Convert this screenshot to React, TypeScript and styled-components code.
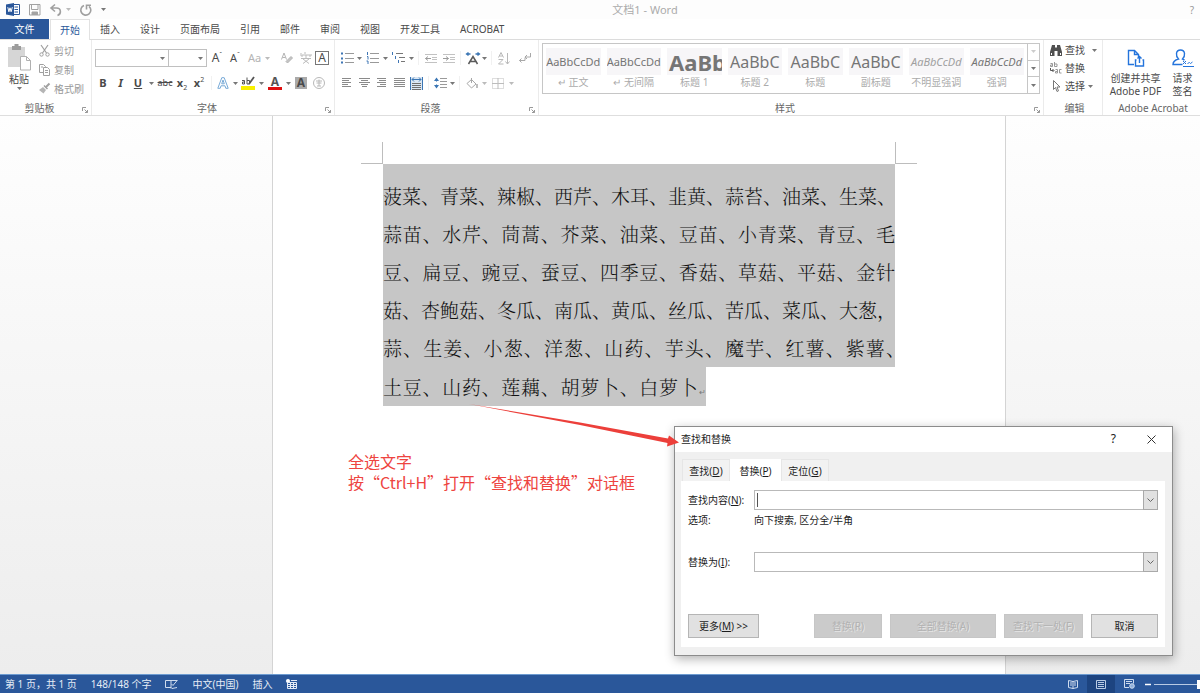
import React from "react";
import styled, { createGlobalStyle, css } from "styled-components";

const ui = '"Noto Sans", "Noto Sans CJK SC", sans-serif';
const blue = "#2a579a";
const ink = "#4a4a4a";
const faded = "#b4b4b4";

const GlobalStyle = createGlobalStyle`
  * { box-sizing: border-box; }
  body { margin: 0; background: #fff; font: 10px/14px ${ui}; color: ${ink}; }
  button, input { font: inherit; color: inherit; padding: 0; margin: 0; border: 0; background: none; border-radius: 0; }
  button { white-space: nowrap; }
  svg { display: block; flex: none; overflow: visible; }
`;

const Window = styled.div`
  position: relative;
  display: flex;
  flex-direction: column;
  min-height: 100vh;
  overflow: hidden;
`;

/* ---------- title bar and tabs ---------- */

const TitleBar = styled.header`
  display: flex;
  align-items: center;
  height: 19px;
  padding: 0 6px;
  background: #fdfdfd;
`;

const QuickAccess = styled.div`
  display: flex;
  align-items: center;
  flex: 1;
  gap: 9px;
`;

const QuickButton = styled.button`
  display: flex;
  align-items: center;
  gap: 4px;
`;

const DocTitle = styled.h1`
  margin: 0;
  padding-left: 90px;
  font-size: 11px;
  font-weight: 400;
  line-height: 18px;
  color: #ababab;
`;

const TitleEnd = styled.div`
  flex: 1;
  display: flex;
  justify-content: flex-end;
  color: #999;
`;

const TabBar = styled.nav`
  display: flex;
  height: 21px;
  border-bottom: 1px solid #dcdcdc;
`;

const Tab = styled.button<{ $active?: boolean }>`
  height: 20px;
  padding: 0 10px;
  ${(p) =>
    p.$active &&
    css`
      height: 21px;
      padding: 0 9px 1px;
      color: ${blue};
      background: #fff;
      border: 1px solid #e2e2e2;
      border-bottom: 0;
    `}
`;

const FileTab = styled.button`
  width: 49px;
  height: 20px;
  margin-right: 1px;
  color: #fff;
  background: ${blue};
`;

/* ---------- ribbon ---------- */

const Ribbon = styled.section`
  display: flex;
  height: 76px;
  border-bottom: 1px solid #dedede;
`;

const Group = styled.section<{ $w?: number }>`
  display: flex;
  flex-direction: column;
  min-width: 0;
  padding: 1px 0 0 3px;
  border-right: 1px solid #ebebeb;
  ${(p) => (p.$w ? `flex: none; width: ${p.$w}px;` : "flex: 1;")}
  &:last-child { border-right: 0; }
`;

const GroupFoot = styled.footer<{ $launch?: boolean }>`
  display: flex;
  align-items: center;
  justify-content: center;
  position: relative;
  height: 15px;
  margin-top: auto;
  padding-right: ${(p) => (p.$launch ? 15 : 0)}px;
  color: #666;
`;

const Launcher = styled.button`
  position: absolute;
  right: 3px;
  bottom: 2px;
`;

const ToolRows = styled.div`
  display: flex;
  flex-direction: column;
  gap: 7px;
  padding-top: 8px;
`;

const ToolRow = styled.div`
  display: flex;
  align-items: center;
  height: 18px;
`;

const Tool = styled.button<{ $w: number; $dim?: boolean }>`
  display: flex;
  align-items: center;
  justify-content: center;
  gap: 4px;
  flex: none;
  width: ${(p) => p.$w}px;
  height: 18px;
  color: ${(p) => (p.$dim ? faded : ink)};
`;

const Divider = styled.span`
  flex: none;
  width: 7px;
  height: 14px;
  background: linear-gradient(#f1f1f1, #f1f1f1) center / 1px 100% no-repeat;
`;

const Combo = styled.div<{ $w: number }>`
  display: flex;
  align-items: center;
  width: ${(p) => p.$w}px;
  height: 18px;
  border: 1px solid #c0c0c0;
  & + & { border-left: 0; }
  input { flex: 1; width: 0; height: 16px; outline: 0; }
  button { width: 11px; display: flex; justify-content: center; }
`;

const ClipBody = styled.div`
  display: flex;
  gap: 3px;
`;

const PasteButton = styled.button`
  display: flex;
  flex-direction: column;
  align-items: center;
  width: 32px;
  padding-top: 3px;
  gap: 1px;
`;

const ClipList = styled.div`
  display: flex;
  flex-direction: column;
  padding-left: 1px;
`;

const ClipItem = styled.button`
  display: flex;
  align-items: center;
  gap: 4px;
  height: 19px;
  color: #999;
`;

const Glyph = styled.span<{ $size?: number; $bold?: boolean; $italic?: boolean; $line?: string; $color?: string }>`
  font-size: ${(p) => p.$size ?? 11}px;
  line-height: 14px;
  font-weight: ${(p) => (p.$bold ? 700 : 400)};
  font-style: ${(p) => (p.$italic ? "italic" : "normal")};
  text-decoration: ${(p) => p.$line ?? "none"};
  color: ${(p) => p.$color ?? "inherit"};
  sub, sup { font-size: 7px; line-height: 0; font-weight: 400; }
`;

const BoxedLetter = styled.span<{ $filled?: boolean }>`
  display: flex;
  align-items: center;
  justify-content: center;
  width: ${(p) => (p.$filled ? 12 : 14)}px;
  height: ${(p) => (p.$filled ? 12 : 14)}px;
  font-size: 12px;
  font-weight: ${(p) => (p.$filled ? 700 : 400)};
  border: ${(p) => (p.$filled ? "0" : "1px solid #777")};
  background: ${(p) => (p.$filled ? "#aaa" : "none")};
`;

const Underbar = styled.span<{ $bar: string }>`
  display: flex;
  flex-direction: column;
  align-items: center;
  width: 14px;
  border-bottom: 3px solid ${(p) => p.$bar};
  font-size: 12px;
  line-height: 11px;
  font-weight: 700;
  color: #555;
`;

/* style gallery */

const Gallery = styled.div`
  display: flex;
  height: 51px;
  margin: 2px 3px 0 0;
  border: 1px solid #c6c6c6;
`;

const StyleGrid = styled.div`
  flex: 1;
  min-width: 0;
  display: grid;
  grid-template-columns: repeat(8, minmax(0, 1fr));
`;

const StyleCard = styled.button`
  display: flex;
  flex-direction: column;
  align-items: stretch;
  justify-content: flex-start;
  padding: 4px 3px 0;
  min-width: 0;
  color: #ababab;
`;

const Sample = styled.span<{ $size: number; $bold?: boolean; $italic?: boolean; $soft?: boolean }>`
  display: flex;
  align-items: center;
  justify-content: ${(p) => (p.$bold ? "flex-start" : "center")};
  height: 27px;
  padding-left: ${(p) => (p.$bold ? 2 : 0)}px;
  line-height: 24px;
  overflow: hidden;
  background: #f7f6f8;
  color: ${(p) => (p.$soft ? "#a0a0a0" : "#757575")};
  font-size: ${(p) => p.$size}px;
  font-weight: ${(p) => (p.$bold ? 700 : 400)};
  font-style: ${(p) => (p.$italic ? "italic" : "normal")};
`;

const GalleryScroll = styled.div`
  display: flex;
  flex-direction: column;
  width: 12px;
  border-left: 1px solid #c6c6c6;
  button {
    flex: 1;
    display: flex;
    align-items: center;
    justify-content: center;
  }
  button + button { border-top: 1px solid #c6c6c6; }
`;

const EditList = styled.div`
  display: flex;
  flex-direction: column;
  padding-left: 3px;
`;

const EditItem = styled.button<{ $spread?: boolean }>`
  display: flex;
  align-items: center;
  gap: 3px;
  height: 18px;
  svg:last-child { margin-left: ${(p) => (p.$spread ? 4 : 0)}px; }
`;

const AcrobatBody = styled.div`
  display: flex;
  justify-content: center;
  margin-left: -3px;
`;

const AcrobatButton = styled.button<{ $w: number }>`
  display: flex;
  flex-direction: column;
  align-items: center;
  width: ${(p) => p.$w}px;
  gap: 5px;
  padding-top: 8px;
  line-height: 13px;
  white-space: pre;
`;

/* ---------- document ---------- */

const Workspace = styled.main`
  flex: 1;
  display: grid;
  grid-template-columns: 272fr 734px 194fr;
  background: linear-gradient(#fefefe, #ededed);
`;

const Page = styled.article`
  grid-column: 2;
  padding: 26px 110px 0;
  background: #fff;
  border: solid #d4d4d4;
  border-width: 0 1px;
`;

const CropMarks = styled.div`
  display: flex;
  justify-content: space-between;
  margin: 0 -22px;
`;

const Corner = styled.span<{ $side: "left" | "right" }>`
  width: 22px;
  height: 22px;
  border-bottom: 1px solid #bdbdbd;
  ${(p) => (p.$side === "left" ? "border-right" : "border-left")}: 1px solid #bdbdbd;
`;

const Lines = styled.div`
  font: 300 19px/38px "Noto Serif CJK SC", "Noto Sans CJK SC", serif;
  color: #111;
`;

const Selection = styled.div`
  padding-top: 13px;
  background: #c6c6c6;
`;

const Line = styled.p<{ $last?: boolean; $hang?: boolean }>`
  margin: 0;
  margin-right: ${(p) => (p.$hang ? -10 : 0)}px;
  white-space: nowrap;
  text-align: justify;
  text-align-last: justify;
  ${(p) =>
    p.$last &&
    css`
      width: 63%;
      height: 39px;
      line-height: 39px;
      background: #c6c6c6;
    `}
  small { font-size: 8px; color: #777; }
`;

/* ---------- annotation ---------- */

const Note = styled.p`
  position: absolute;
  left: 348px;
  top: 451px;
  margin: 0;
  font: 16px/21px "Noto Sans CJK SC", sans-serif;
  color: #ee4440;
  white-space: nowrap;
`;

const Arrow = styled.svg`
  position: absolute;
  left: 468px;
  top: 402px;
  z-index: 3;
  pointer-events: none;
`;

/* ---------- dialog ---------- */

const Dialog = styled.section`
  position: absolute;
  z-index: 2;
  left: 674px;
  top: 426px;
  width: 499px;
  display: flex;
  flex-direction: column;
  padding-bottom: 8px;
  border: 1px solid #8c8c8c;
  background: #f0f0f0;
  box-shadow: 1px 3px 10px rgba(0, 0, 0, 0.3);
  color: #1c1c1c;
`;

const DialogTitle = styled.header`
  display: flex;
  align-items: center;
  height: 25px;
  padding: 0 16px 1px 6px;
  background: #fff;
  h2 { flex: 1; margin: 0; font-size: 10px; font-weight: 400; }
`;

const TitleButton = styled.button<{ $gap?: boolean }>`
  display: flex;
  font-size: 12px;
  margin-right: ${(p) => (p.$gap ? 31 : 0)}px;
`;

const DialogTabs = styled.div`
  display: flex;
  padding: 7px 0 0 7px;
`;

const DialogTab = styled.button<{ $active?: boolean; $w: number }>`
  width: ${(p) => p.$w}px;
  height: 22px;
  border: 1px solid ${(p) => (p.$active ? "#fff" : "#e6e6e6")};
  border-bottom: 0;
  background: ${(p) => (p.$active ? "#fff" : "#f2f2f2")};
`;

const DialogPanel = styled.div`
  display: flex;
  flex-direction: column;
  margin: 0 7px 0 6px;
  padding: 9px 7px 9px;
  background: #fff;
`;

const Field = styled.div`
  display: grid;
  grid-template-columns: 66px 1fr;
  align-items: center;
  min-height: 20px;
  label { white-space: nowrap; }
`;

const FieldGroup = styled.div`
  display: flex;
  flex-direction: column;
  height: 62px;
`;

const InputBox = styled.div`
  position: relative;
  display: flex;
  height: 20px;
  border: 1px solid #b9b9b9;
  input { flex: 1; min-width: 0; padding: 0 4px; outline: 0; }
  button {
    display: flex;
    align-items: center;
    justify-content: center;
    width: 15px;
    margin: -1px;
    border: 1px solid #a9a9a9;
    background: #e1e1e1;
  }
`;

const Caret = styled.span`
  position: absolute;
  left: 2px;
  top: 2px;
  width: 1px;
  height: 14px;
  background: #555;
`;

const Actions = styled.div`
  display: flex;
  gap: 8px;
`;

const ActionButton = styled.button<{ $w: number; $push?: boolean }>`
  width: ${(p) => p.$w}px;
  height: 24px;
  border: 1px solid #b5b5b5;
  background: #e1e1e1;
  ${(p) => p.$push && "margin-right: auto;"}
  &:disabled {
    border-color: #c6c6c6;
    background: #cbcbcb;
    color: #b2b2b2;
    text-shadow: 1px 1px 0 #e6e6e6;
  }
`;

/* ---------- status bar ---------- */

const StatusBar = styled.footer`
  display: flex;
  align-items: center;
  height: 19px;
  padding-left: 5px;
  background: ${blue};
  border-top: 1px solid #6d9bd0;
  color: #e6edf6;
`;

const StatusItems = styled.div`
  display: flex;
  align-items: center;
  gap: 14px;
  flex: 1;
`;

const ViewButton = styled.button<{ $on?: boolean }>`
  display: flex;
  align-items: center;
  justify-content: center;
  width: 28px;
  height: 18px;
  background: ${(p) => (p.$on ? "#1d4480" : "none")};
`;

const ZoomSlider = styled.input`
  appearance: none;
  width: 46px;
  height: 12px;
  margin-left: 2px;
  background: linear-gradient(#b9cbe4, #b9cbe4) center / 100% 1px no-repeat;
  &::-webkit-slider-thumb {
    appearance: none;
    width: 3px;
    height: 9px;
    background: #fff;
  }
`;

/* ---------- icons ---------- */

const Caron = ({ c = "#777" }: { c?: string }) => (
  <svg width="5" height="3" viewBox="0 0 5 3"><path d="M0 0h5L2.5 3z" fill={c} /></svg>
);

const Icon = ({ w = 14, h = 14, children, c = "#777" }: { w?: number; h?: number; c?: string; children: React.ReactNode }) => (
  <svg width={w} height={h} viewBox={`0 0 ${w} ${h}`} fill="none" stroke={c} strokeWidth="1">{children}</svg>
);

const WordLogo = () => (
  <Icon w={14} h={13} c="none">
    <path d="M7 1.5h6.5v10H7z" fill="#fff" stroke={blue} />
    <path d="M8.500 4h3.500M8.500 6.500h3.500M8.500 9h3.500" stroke={blue} />
    <path d="M0 1.500 8 0v13L0 11.500z" fill={blue} />
    <path d="M1.800 4.200 2.900 8.800 4 4.800 5.100 8.800 6.300 4.200" stroke="#fff" />
  </Icon>
);

const SaveIcon = () => (
  <Icon w={12} h={12} c="#a3a3a3">
    <path d="M.5.5h10.500v10.500H.5z" /><path d="M2.500.5v5h6.500v-5" /><path d="M3 11V8h5.500v3" fill="#a3a3a3" />
  </Icon>
);

const UndoIcon = () => (
  <Icon w={12} h={12} c="#a0a0a0"><path d="M5 .5 1 4l4 3.500M1 4h5.500c5 0 5 6 1 7.500" strokeWidth="1.600" /></Icon>
);

const RedoIcon = () => (
  <Icon w={12} h={12} c="#a0a0a0"><path d="M4 1.500a5 5 0 1 0 5 .8M6.500 5.500V1.200H11" strokeWidth="1.600" /></Icon>
);

const LaunchIcon = () => (
  <Icon w={6} h={6} c="#999"><path d="M.5 4V.5H4M2.500 2.500l3 3M5.500 3v2.500H3" /></Icon>
);

const PasteIcon = () => (
  <Icon w={24} h={27} c="none">
    <path d="M1 3h17v20H1z" fill="#d6d6d6" /><path d="M5 2h2.500V0h4v2H14v4H5z" fill="#9c9c9c" />
    <path d="M13.500 12.500h6l4 4v9.500h-10z" fill="#fff" stroke="#b0b0b0" /><path d="M19.500 12.500v4h4" stroke="#b0b0b0" />
  </Icon>
);

const CutIcon = () => (
  <Icon w={11} h={12} c="#a0a0a0">
    <path d="M2 0l5.500 8M9 0 3.500 8" strokeWidth="1.200" /><circle cx="2.500" cy="9.500" r="1.700" /><circle cx="8.500" cy="9.500" r="1.700" />
  </Icon>
);

const CopyIcon = () => (
  <Icon w={11} h={12} c="#a0a0a0">
    <path d="M.5.5h4l2 2v6h-6z" /><path d="M4.500 3.500h4l2 2v6h-6z" fill="#fff" /><path d="M6 6.500h3M6 8.500h3M2 3h2" />
  </Icon>
);

const BrushIcon = () => (
  <Icon w={11} h={11} c="#a0a0a0">
    <path d="M10.500.5 7 4" strokeWidth="2" /><path d="M5 2.500 8.500 6" strokeWidth="1.500" /><path d="M4 4 7 7 4.500 10.500 0 7z" fill="#b5b5b5" stroke="none" />
  </Icon>
);

const ListIcon = ({ kind }: { kind: "dot" | "num" | "level" }) => (
  <Icon w={13} h={12}>
    {kind === "level" ? (
      <>
        <path d="M4 1.500h7M7 5.500h6M9 9.500h4" /><path d="M.5 0v3M3.500 4v3M6.500 8v3" stroke="#3f76b5" />
      </>
    ) : (
      <>
        <path d="M4 1.500h9M4 6.500h9M4 10.500h9" stroke="#999" />
        {kind === "dot" ? (
          <path d="M0 1.500h2M0 6.500h2M0 10.500h2" stroke="#3f76b5" strokeWidth="2" />
        ) : (
          <path d="M1.500 0v3M1 4.500h1v3M.5 9h1.500v3" stroke="#3f76b5" />
        )}
      </>
    )}
  </Icon>
);

const IndentIcon = ({ right }: { right?: boolean }) => (
  <Icon w={12} h={9} c="#c2c2c2">
    <path d="M0 .5h12M7 3.500h5M7 5.500h5M0 8.500h12" />
    <path d={right ? "M0 4.500h5.500M3 2.500l2.500 2L3 6.500" : "M6 4.500H.5M3 2.500.5 4.500 3 6.500"} stroke="#9c9c9c" />
  </Icon>
);

const AlignIcon = ({ rows }: { rows: [number, number][] }) => (
  <Icon w={11} h={10} c="#8a8a8a">
    <path d={rows.map(([x, len], i) => `M${x} ${i * 2 + 0.5}h${len}`).join("")} />
  </Icon>
);

const DistributeIcon = () => (
  <Icon w={13} h={13} c="#6f6f6f">
    <path d="M0 0h13v13H0z" fill="#dbe7f3" stroke="none" />
    <path d="M.5 0v13M12.500 0v13M2 2.500h9M4 .5 2 2.500l2 2M9 .5l2 2-2 2" stroke="#3b76b4" />
    <path d="M2 6.500h9M2 8.500h9M2 10.500h9M2 12.500h9" />
  </Icon>
);

const SpacingIcon = () => (
  <Icon w={13} h={12} c="#9a9a9a">
    <path d="M6 1.500h7M6 4.500h7M6 7.500h7M6 10.500h7" />
    <path d="M2.500 1v3.500M2.500 7.500V11" stroke="#3b76b4" />
    <path d="M0 4 2.500.500 5 4zM0 8l2.500 3.500L5 8z" fill="#3b76b4" stroke="none" />
  </Icon>
);

const ScaleIcon = () => (
  <Icon w={14} h={13} c="#5a5a5a">
    <path d="M2.500 12 7 4.500 11.500 12M4.500 9.500h5" strokeWidth="1.500" />
    <path d="M.5 2h4M2.500.5.5 2l2 1.500M13.500 2h-4M11.500.5l2 1.500-2 1.500" stroke="#3b76b4" strokeWidth="1.300" />
  </Icon>
);

const SortIcon = () => (
  <Icon w={12} h={13} c="#b8b8b8">
    <path d="M.5 5.500 3 .5l2.500 5M1.500 4h3M.5 7.500h4.500L.5 12h5M9.500 1v11M7.500 9.500l2 2.500 2-2.500" />
  </Icon>
);

const MarkIcon = () => (
  <Icon w={12} h={12} c="#a8a8a8">
    <path d="M11.500 1v4H6M8 3 6 5l2 2M6 5.500v3H.5M2.500 6.500l-2 2 2 2" />
  </Icon>
);

const BucketIcon = () => (
  <Icon w={12} h={11} c="#a8a8a8"><path d="M5.500 1.500 10 6l-4.500 4L1 5.500zM5.500 0v5" /><path d="M11 6v4" strokeWidth="1.500" /></Icon>
);

const BordersIcon = () => (
  <Icon w={12} h={11} c="#bdbdbd"><path d="M.5.500h11v10H.5z" strokeDasharray="1 1" /><path d="M0 5.500h12M6 0v11" /></Icon>
);

const EraserIcon = () => (
  <Icon w={12} h={12} c="#b4b4b4"><path d="M.5 7.500 3 1l2.500 6.500M1.500 5.500h3" /><path d="m5 9.500 5-5 1.500 1.500-5 5z" fill="#c4c4c4" /></Icon>
);

const PhoneticIcon = () => (
  <Icon w={12} h={12} c="#bcbcbc"><path d="M1 1v3h2V2M5 0v4h2V2M9 2v2h2V2M1 6.500h10M6 5v1.500M3 7l6 4.500M9 7l-6 4.500" /></Icon>
);

const OutlineA = () => (
  <Icon w={12} h={12} c="#79abd8"><path d="M.8 11.300 4.800.7h2.400l4 10.600H8.800L8 8.800H4L3.200 11.300zM4.700 6.800h2.600L6 3z" fill="#fff" /></Icon>
);

const HighlightIcon = () => (
  <Icon w={14} h={14} c="#555">
    <path d="M1 4.500h2.500V8H1.500V6h2M6 1.500V8h2.500V4.500H6" /><path d="m13 1-5 7" strokeWidth="1.800" /><path d="M0 10h14v4H0z" fill="#f8f000" stroke="none" />
  </Icon>
);

const CircleCharIcon = () => (
  <Icon w={12} h={12} c="#b8b8b8"><circle cx="6" cy="6" r="5.500" /><path d="M3 4h6M6 2.500V9M3.500 6h5M4 9h4" /></Icon>
);

const FindIcon = () => (
  <Icon w={12} h={11} c="none">
    <path d="M2 0h3v2.500h2V0h3l2 7v4H7.500V6h-3v5H0V7z" fill="#505050" /><path d="M1.500 8v2M10.500 8v2" stroke="#fff" />
  </Icon>
);

const ReplaceIcon = () => (
  <Icon w={12} h={12} c="#999">
    <path d="M.5 1.500h2v3h-2v-1.500h2M4.500 0v4.500h2.500v-2.500H4.500M5.500 7.500h2V11h-2V9.500h2M11.500 7.500H9.500V11h2" /><path d="M.5 6v2.500h3M2.500 7l1.500 1.500L2.500 10" stroke="#555" />
  </Icon>
);

const PointerIcon = () => (
  <Icon w={12} h={12} c="#777"><path d="M3.500.5v9l2-2 1.500 4 1.500-.7-1.500-3.800h3z" fill="#fff" /></Icon>
);

const PdfIcon = () => (
  <Icon w={18} h={18} c="#2474dc">
    <path d="M7 15.500H1.500v-14h6l4 4V8M7.500 1.500v4h4" strokeWidth="1.400" />
    <path d="M9.500 11H8.500v6h8v-6h-1M12.500 14V7.500M10.500 9.500l2-2 2 2" strokeWidth="1.400" />
  </Icon>
);

const SignIcon = () => (
  <Icon w={22} h={18} c="#2474dc">
    <path d="M10.500 15.500H1c0-3.500 2-4.500 5.500-5.500C3.500 7 3.500 1 8.500 1s5 6 2 9l2 1" strokeWidth="1.400" />
    <path d="m11 12 3 3M14 12l-3 3M15.500 14.500l2-1 1 1 2-1.500M11 17.500h11" />
  </Icon>
);

const CloseIcon = () => (
  <Icon w={9} h={9} c="#333"><path d="m.5.5 8 8M8.500.5l-8 8" /></Icon>
);

const ChevronIcon = () => (
  <Icon w={7} h={5} c="#666"><path d="m.5.5 3 3 3-3" /></Icon>
);

const ProofIcon = () => (
  <Icon w={13} h={10} c="#cfdcee"><path d="M6 1.500v8M6 1.500H.5v7H6l1 1 5-1M6 1.500h6M12.500 1 8 6.500 6.500 5" /></Icon>
);

const MacroIcon = () => (
  <Icon w={11} h={10} c="#e3ebf6"><path d="M1.500 3.500h9v6h-9zM1.500 5.500h9M1.500 7.500h9M4.500 3.500v6M7.500 3.500v6" /><circle cx="2" cy="2" r="1.700" fill="#fff" /><path d="M5 1.500h6" /></Icon>
);

const ReadIcon = () => (
  <Icon w={10} h={9} c="#cfdcee"><path d="M5 1v8M.5.5 5 1.500 9.500.5v7L5 8.500.5 7.500zM2 3h2M2 5h2M6 3h2M6 5h2" /></Icon>
);

const PrintIcon = () => (
  <Icon w={10} h={9} c="#b9cbe4"><path d="M.5.5h9v8h-9zM2 2.500h6M2 4.500h6M2 6.500h6" /></Icon>
);

const WebIcon = () => (
  <Icon w={11} h={10} c="#cfdcee"><path d="M5 8.500H.5v-8h9v4M2 2.500h6M2 4.500h4" /><circle cx="8" cy="7" r="2.300" fill="#8fb0dc" /></Icon>
);

/* ---------- data ---------- */

const tabs = ["插入", "设计", "页面布局", "引用", "邮件", "审阅", "视图", "开发工具", "ACROBAT"];

const styleCards = [
  { sample: "AaBbCcDd", name: "↵ 正文", size: 11 },
  { sample: "AaBbCcDd", name: "↵ 无间隔", size: 11 },
  { sample: "AaBb", name: "标题 1", size: 22, bold: true },
  { sample: "AaBbC", name: "标题 2", size: 16 },
  { sample: "AaBbC", name: "标题", size: 16 },
  { sample: "AaBbC", name: "副标题", size: 16 },
  { sample: "AaBbCcDd", name: "不明显强调", size: 11, italic: true, soft: true },
  { sample: "AaBbCcDd", name: "强调", size: 11, italic: true },
];

const lines = [
  { text: "菠菜、青菜、辣椒、西芹、木耳、韭黄、蒜苔、油菜、生菜、" },
  { text: "蒜苗、水芹、茼蒿、芥菜、油菜、豆苗、小青菜、青豆、毛" },
  { text: "豆、扁豆、豌豆、蚕豆、四季豆、香菇、草菇、平菇、金针" },
  { text: "菇、杏鲍菇、冬瓜、南瓜、黄瓜、丝瓜、苦瓜、菜瓜、大葱，" },
  { text: "蒜、生姜、小葱、洋葱、山药、芋头、魔芋、红薯、紫薯、", hang: true },
];

const Foot = ({ label, launch }: { label: string; launch?: boolean }) => (
  <GroupFoot $launch={launch}>
    {label}
    {launch && <Launcher aria-label={`${label}设置`}><LaunchIcon /></Launcher>}
  </GroupFoot>
);

export default function App() {
  return (
    <Window lang="zh-CN">
      <GlobalStyle />
      <TitleBar>
        <QuickAccess>
          <WordLogo />
          <QuickButton aria-label="保存"><SaveIcon /></QuickButton>
          <QuickButton aria-label="撤消"><UndoIcon /><Caron c="#bbb" /></QuickButton>
          <QuickButton aria-label="恢复"><RedoIcon /></QuickButton>
          <QuickButton aria-label="自定义"><Caron /></QuickButton>
        </QuickAccess>
        <DocTitle>文档1 - Word</DocTitle>
        <TitleEnd>?</TitleEnd>
      </TitleBar>

      <TabBar>
        <FileTab>文件</FileTab>
        <Tab $active>开始</Tab>
        {tabs.map((t) => <Tab key={t}>{t}</Tab>)}
      </TabBar>

      <Ribbon>
        <Group $w={92}>
          <ClipBody>
            <PasteButton><PasteIcon /><span>粘贴</span><Caron /></PasteButton>
            <ClipList>
              <ClipItem><CutIcon />剪切</ClipItem>
              <ClipItem><CopyIcon />复制</ClipItem>
              <ClipItem><BrushIcon />格式刷</ClipItem>
            </ClipList>
          </ClipBody>
          <Foot label="剪贴板" launch />
        </Group>

        <Group $w={243}>
          <ToolRows>
            <ToolRow>
              <Combo $w={74}><input aria-label="字体" /><button aria-label="展开字体"><Caron /></button></Combo>
              <Combo $w={38}><input aria-label="字号" /><button aria-label="展开字号"><Caron /></button></Combo>
              <Tool $w={20}><Glyph $size={12}>A<sup>ˆ</sup></Glyph></Tool>
              <Tool $w={16}><Glyph $size={11}>A<sup>ˇ</sup></Glyph></Tool>
              <Tool $w={32} $dim><Glyph>Aa</Glyph><Caron c="#bbb" /></Tool>
              <Tool $w={24} aria-label="清除格式"><EraserIcon /></Tool>
              <Tool $w={14} aria-label="拼音"><PhoneticIcon /></Tool>
              <Tool $w={18}><BoxedLetter>A</BoxedLetter></Tool>
            </ToolRow>
            <ToolRow>
              <Tool $w={16}><Glyph $bold>B</Glyph></Tool>
              <Tool $w={19}><Glyph $bold $italic>I</Glyph></Tool>
              <Tool $w={16}><Glyph $bold $line="underline">U</Glyph></Tool>
              <Tool $w={10} aria-label="下划线样式"><Caron /></Tool>
              <Tool $w={18}><Glyph $size={9} $line="line-through">abc</Glyph></Tool>
              <Tool $w={16}><Glyph $bold>x<sub>2</sub></Glyph></Tool>
              <Tool $w={18}><Glyph $bold>x<sup>2</sup></Glyph></Tool>
              <Divider />
              <Tool $w={16} aria-label="文本效果"><OutlineA /></Tool>
              <Tool $w={8} aria-label="文本效果选项"><Caron /></Tool>
              <Tool $w={18} aria-label="突出显示"><HighlightIcon /></Tool>
              <Tool $w={9} aria-label="突出显示颜色"><Caron /></Tool>
              <Tool $w={18}><Underbar $bar="#e01010">A</Underbar></Tool>
              <Tool $w={8} aria-label="字体颜色"><Caron /></Tool>
              <Tool $w={18}><BoxedLetter $filled>A</BoxedLetter></Tool>
              <Tool $w={18} aria-label="带圈字符"><CircleCharIcon /></Tool>
            </ToolRow>
          </ToolRows>
          <Foot label="字体" launch />
        </Group>

        <Group $w={204}>
          <ToolRows>
            <ToolRow>
              <Tool $w={18} aria-label="项目符号"><ListIcon kind="dot" /></Tool>
              <Tool $w={7} aria-label="项目符号选项"><Caron /></Tool>
              <Tool $w={19} aria-label="编号"><ListIcon kind="num" /></Tool>
              <Tool $w={7} aria-label="编号选项"><Caron /></Tool>
              <Tool $w={19} aria-label="多级列表"><ListIcon kind="level" /></Tool>
              <Tool $w={7} aria-label="多级列表选项"><Caron /></Tool>
              <Divider />
              <Tool $w={18} aria-label="减少缩进"><IndentIcon /></Tool>
              <Tool $w={17} aria-label="增加缩进"><IndentIcon right /></Tool>
              <Divider />
              <Tool $w={17} aria-label="中文版式"><ScaleIcon /></Tool>
              <Tool $w={7} aria-label="中文版式选项"><Caron /></Tool>
              <Divider />
              <Tool $w={18} aria-label="排序"><SortIcon /></Tool>
              <Tool $w={24} aria-label="显示编辑标记"><MarkIcon /></Tool>
            </ToolRow>
            <ToolRow>
              <Tool $w={17} aria-label="左对齐"><AlignIcon rows={[[1, 9], [1, 7], [1, 9], [1, 6], [1, 9]]} /></Tool>
              <Tool $w={18} aria-label="居中"><AlignIcon rows={[[0, 11], [2, 7], [0, 11], [2, 7], [3, 5]]} /></Tool>
              <Tool $w={17} aria-label="右对齐"><AlignIcon rows={[[1, 9], [3, 7], [1, 9], [4, 6], [1, 9]]} /></Tool>
              <Tool $w={18} aria-label="两端对齐"><AlignIcon rows={[[0, 11], [0, 11], [0, 11], [0, 11], [0, 11]]} /></Tool>
              <Tool $w={17} aria-label="分散对齐"><DistributeIcon /></Tool>
              <Divider />
              <Tool $w={17} aria-label="行距"><SpacingIcon /></Tool>
              <Tool $w={7} aria-label="行距选项"><Caron /></Tool>
              <Divider />
              <Tool $w={17} aria-label="底纹"><BucketIcon /></Tool>
              <Tool $w={8} aria-label="底纹颜色"><Caron c="#bbb" /></Tool>
              <Tool $w={19} aria-label="边框"><BordersIcon /></Tool>
              <Tool $w={8} aria-label="边框选项"><Caron c="#bbb" /></Tool>
            </ToolRow>
          </ToolRows>
          <Foot label="段落" launch />
        </Group>

        <Group>
          <Gallery>
            <StyleGrid>
              {styleCards.map((s) => (
                <StyleCard key={s.name}>
                  <Sample $size={s.size} $bold={s.bold} $italic={s.italic} $soft={s.soft}>{s.sample}</Sample>
                  <span>{s.name}</span>
                </StyleCard>
              ))}
            </StyleGrid>
            <GalleryScroll>
              <button aria-label="向上"><Caron c="#ccc" /></button>
              <button aria-label="向下"><Caron /></button>
              <button aria-label="其他"><Caron /></button>
            </GalleryScroll>
          </Gallery>
          <Foot label="样式" launch />
        </Group>

        <Group $w={59}>
          <EditList>
            <EditItem $spread><FindIcon />查找<Caron /></EditItem>
            <EditItem><ReplaceIcon />替换</EditItem>
            <EditItem><PointerIcon />选择<Caron /></EditItem>
          </EditList>
          <Foot label="编辑" />
        </Group>

        <Group $w={97}>
          <AcrobatBody>
            <AcrobatButton $w={62}><PdfIcon />{"创建并共享\nAdobe PDF"}</AcrobatButton>
            <AcrobatButton $w={32}><SignIcon />{"请求\n签名"}</AcrobatButton>
          </AcrobatBody>
          <Foot label="Adobe Acrobat" />
        </Group>
      </Ribbon>

      <Workspace>
        <Page>
          <CropMarks><Corner $side="left" /><Corner $side="right" /></CropMarks>
          <Lines>
            <Selection>
              {lines.map((l) => <Line key={l.text} $hang={l.hang}>{l.text}</Line>)}
            </Selection>
            <Line $last>土豆、山药、莲藕、胡萝卜、白萝卜<small>↵</small></Line>
          </Lines>
        </Page>
      </Workspace>

      <StatusBar>
        <StatusItems>
          <span>第 1 页，共 1 页</span>
          <span>148/148 个字</span>
          <ProofIcon />
          <span>中文(中国)</span>
          <span>插入</span>
          <MacroIcon />
        </StatusItems>
        <ViewButton aria-label="阅读视图"><ReadIcon /></ViewButton>
        <ViewButton aria-label="页面视图" $on><PrintIcon /></ViewButton>
        <ViewButton aria-label="Web 版式视图"><WebIcon /></ViewButton>
        <button aria-label="缩小"><Icon w={9} h={9} c="#fff"><path d="M2 4.500h6" strokeWidth="1.500" /></Icon></button>
        <ZoomSlider type="range" aria-label="缩放" min={0} max={100} defaultValue={100} />
      </StatusBar>

      <Note>全选文字<br />按“Ctrl+H”打开“查找和替换”对话框</Note>
      <Arrow width="212" height="46" viewBox="468 402 212 46" fill="#ec3f3a">
        <path d="M469 404 580 422.500 668 438.500 669 435.500 679 442.500 667 446.500 667.500 443 580 425z" />
      </Arrow>

      <Dialog role="dialog" aria-label="查找和替换">
        <DialogTitle>
          <h2>查找和替换</h2>
          <TitleButton $gap>?</TitleButton>
          <TitleButton aria-label="关闭"><CloseIcon /></TitleButton>
        </DialogTitle>
        <DialogTabs>
          <DialogTab $w={48}>查找(<u>D</u>)</DialogTab>
          <DialogTab $w={51} $active>替换(<u>P</u>)</DialogTab>
          <DialogTab $w={48}>定位(<u>G</u>)</DialogTab>
        </DialogTabs>
        <DialogPanel>
          <FieldGroup>
            <Field>
              <label htmlFor="find">查找内容(<u>N</u>):</label>
              <InputBox><Caret /><input id="find" /><button aria-label="展开查找内容"><ChevronIcon /></button></InputBox>
            </Field>
            <Field><span>选项:</span><span>向下搜索, 区分全/半角</span></Field>
          </FieldGroup>
          <FieldGroup>
            <Field>
              <label htmlFor="replace">替换为(<u>I</u>):</label>
              <InputBox><input id="replace" /><button aria-label="展开替换为"><ChevronIcon /></button></InputBox>
            </Field>
          </FieldGroup>
          <Actions>
            <ActionButton $w={71} $push>更多(<u>M</u>) &gt;&gt;</ActionButton>
            <ActionButton $w={68} disabled>替换(R)</ActionButton>
            <ActionButton $w={106} disabled>全部替换(A)</ActionButton>
            <ActionButton $w={79} disabled>查找下一处(F)</ActionButton>
            <ActionButton $w={67}>取消</ActionButton>
          </Actions>
        </DialogPanel>
      </Dialog>
    </Window>
  );
}
